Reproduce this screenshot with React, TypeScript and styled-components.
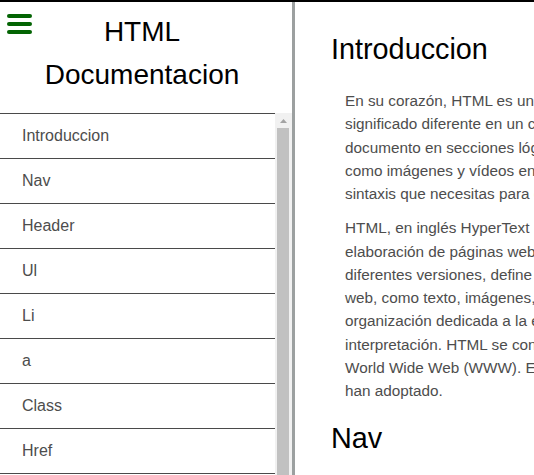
import React from "react";
import styled, { createGlobalStyle } from "styled-components";

const GlobalStyle = createGlobalStyle`
  html, body {
    margin: 0;
    padding: 0;
    overflow: hidden;
    background: #fff;
    font-family: "Liberation Sans", Arial, sans-serif;
  }
`;

const Page = styled.div`
  display: grid;
  grid-template-columns: auto 1fr;
  height: 100vh;
  border-top: 2px solid #000;
  box-sizing: border-box;
  overflow: hidden;
`;

const Sidebar = styled.nav`
  display: flex;
  flex-direction: column;
  border-right: 3px solid #9ca0a0;
  width: 292px;
  overflow: hidden;
`;

const Header = styled.header`
  display: grid;
  padding-bottom: 17px;
  flex-shrink: 0;
`;

const Burger = styled.button`
  grid-area: 1 / 1;
  align-self: start;
  justify-self: start;
  display: flex;
  flex-direction: column;
  gap: 4px;
  margin: 12px 0 0 7px;
  padding: 0;
  border: 0;
  background: none;
  width: 25px;
  cursor: pointer;
`;

const Bar = styled.span`
  display: block;
  height: 4px;
  border-radius: 2px;
  background: #036403;
`;

const Title = styled.h1`
  grid-area: 1 / 1;
  margin: 0;
  padding: 8px 40px 0 32px;
  font-size: 28px;
  font-weight: normal;
  line-height: 43px;
  text-align: center;
  color: #000;
`;

const ListArea = styled.div`
  display: flex;
  height: 100vh;
  flex-shrink: 0;
  overflow: hidden;
`;

const List = styled.ul`
  list-style: none;
  margin: 0;
  padding: 0;
  flex: 1;
  min-width: 0;
  border-top: 1px solid #4a4a4a;
  align-self: flex-start;
`;

const Item = styled.li`
  display: flex;
  align-items: center;
  height: 44px;
  padding-left: 22px;
  border-bottom: 1px solid #4a4a4a;
  font-size: 16px;
  color: #4d4d4d;
`;

const ScrollTrack = styled.div`
  display: flex;
  flex-direction: column;
  width: 17px;
  flex-shrink: 0;
  background: #f1f1f1;
`;

const ScrollArrow = styled.div`
  display: flex;
  align-items: center;
  justify-content: center;
  height: 15px;
  flex-shrink: 0;
`;

const ScrollThumb = styled.div`
  flex: 1;
  margin: 0 3px 0 2px;
  background: #c1c1c1;
`;

const Main = styled.main`
  display: flex;
  flex-direction: column;
  gap: 9px;
  padding: 31px 0 0 36px;
  overflow: hidden;
  min-width: 0;
`;

const Section = styled.section`
  display: flex;
  flex-direction: column;
`;

const Heading = styled.h2`
  margin: 0 0 23px;
  font-size: 28.8px;
  font-weight: normal;
  line-height: normal;
  color: #000;
`;

const Para = styled.p`
  margin: 0 0 11px;
  padding-left: 14px;
  font-size: 15.3px;
  line-height: 23.25px;
  color: #4d4d4d;
  white-space: nowrap;
`;

const navItems = [
  "Introduccion",
  "Nav",
  "Header",
  "Ul",
  "Li",
  "a",
  "Class",
  "Href",
  "Id",
  "Main",
  "Section",
  "Footer",
];

const p1 = [
  "En su corazón, HTML es un lenguaje bastante sencillo compuesto de elementos, que se pueden aplicar a piezas de texto para darles un",
  "significado diferente en un contexto (¿es un párrafo?, ¿es una lista con viñetas?, ¿es parte de una tabla?), estructurar un",
  "documento en secciones lógicas (¿tiene un encabezado?, ¿tres columnas de contenido?, ¿un menú de navegación?) e incrustar contenido",
  "como imágenes y vídeos en una página. Este módulo presentará los dos primeros de estos y presentará los conceptos fundamentales y la",
  "sintaxis que necesitas para entender HTML.",
];

const p2 = [
  "HTML, en inglés HyperText Markup Language, hace referencia al lenguaje de marcado para la",
  "elaboración de páginas web. Es un estándar que sirve de referencia del software que conecta con la elaboración de páginas web en sus",
  "diferentes versiones, define una estructura básica y un código (denominado código HTML) para la definición de contenido de una página",
  "web, como texto, imágenes, videos, juegos, entre otros. Es un estándar a cargo del World Wide Web Consortium (W3C) o Consorcio WWW,",
  "organización dedicada a la estandarización de casi todas las tecnologías ligadas a la web, sobre todo en lo referente a su escritura e",
  "interpretación. HTML se considera el lenguaje web más importante siendo su invención crucial en la aparición, desarrollo y expansión de la",
  "World Wide Web (WWW). Es el estándar que se ha impuesto en la visualización de páginas web y es el que todos los navegadores actuales",
  "han adoptado.",
];

const Lines: React.FC<{ lines: string[] }> = ({ lines }) => (
  <>
    {lines.map((l, i) => (
      <React.Fragment key={i}>
        {l}
        {i < lines.length - 1 && <br />}
      </React.Fragment>
    ))}
  </>
);

export default function App() {
  return (
    <>
      <GlobalStyle />
      <Page>
        <Sidebar>
          <Header>
            <Burger aria-label="menu">
              <Bar />
              <Bar />
              <Bar />
            </Burger>
            <Title>HTML Documentacion</Title>
          </Header>
          <ListArea>
            <List>
              {navItems.map((n) => (
                <Item key={n}>{n}</Item>
              ))}
            </List>
            <ScrollTrack aria-hidden="true">
              <ScrollArrow>
                <svg width="7" height="4" viewBox="0 0 7 4">
                  <path d="M0 4 L3.5 0 L7 4 Z" fill="#a3a3a3" />
                </svg>
              </ScrollArrow>
              <ScrollThumb />
            </ScrollTrack>
          </ListArea>
        </Sidebar>
        <Main>
          <Section>
            <Heading>Introduccion</Heading>
            <Para>
              <Lines lines={p1} />
            </Para>
            <Para>
              <Lines lines={p2} />
            </Para>
          </Section>
          <Section>
            <Heading>Nav</Heading>
          </Section>
        </Main>
      </Page>
    </>
  );
}
